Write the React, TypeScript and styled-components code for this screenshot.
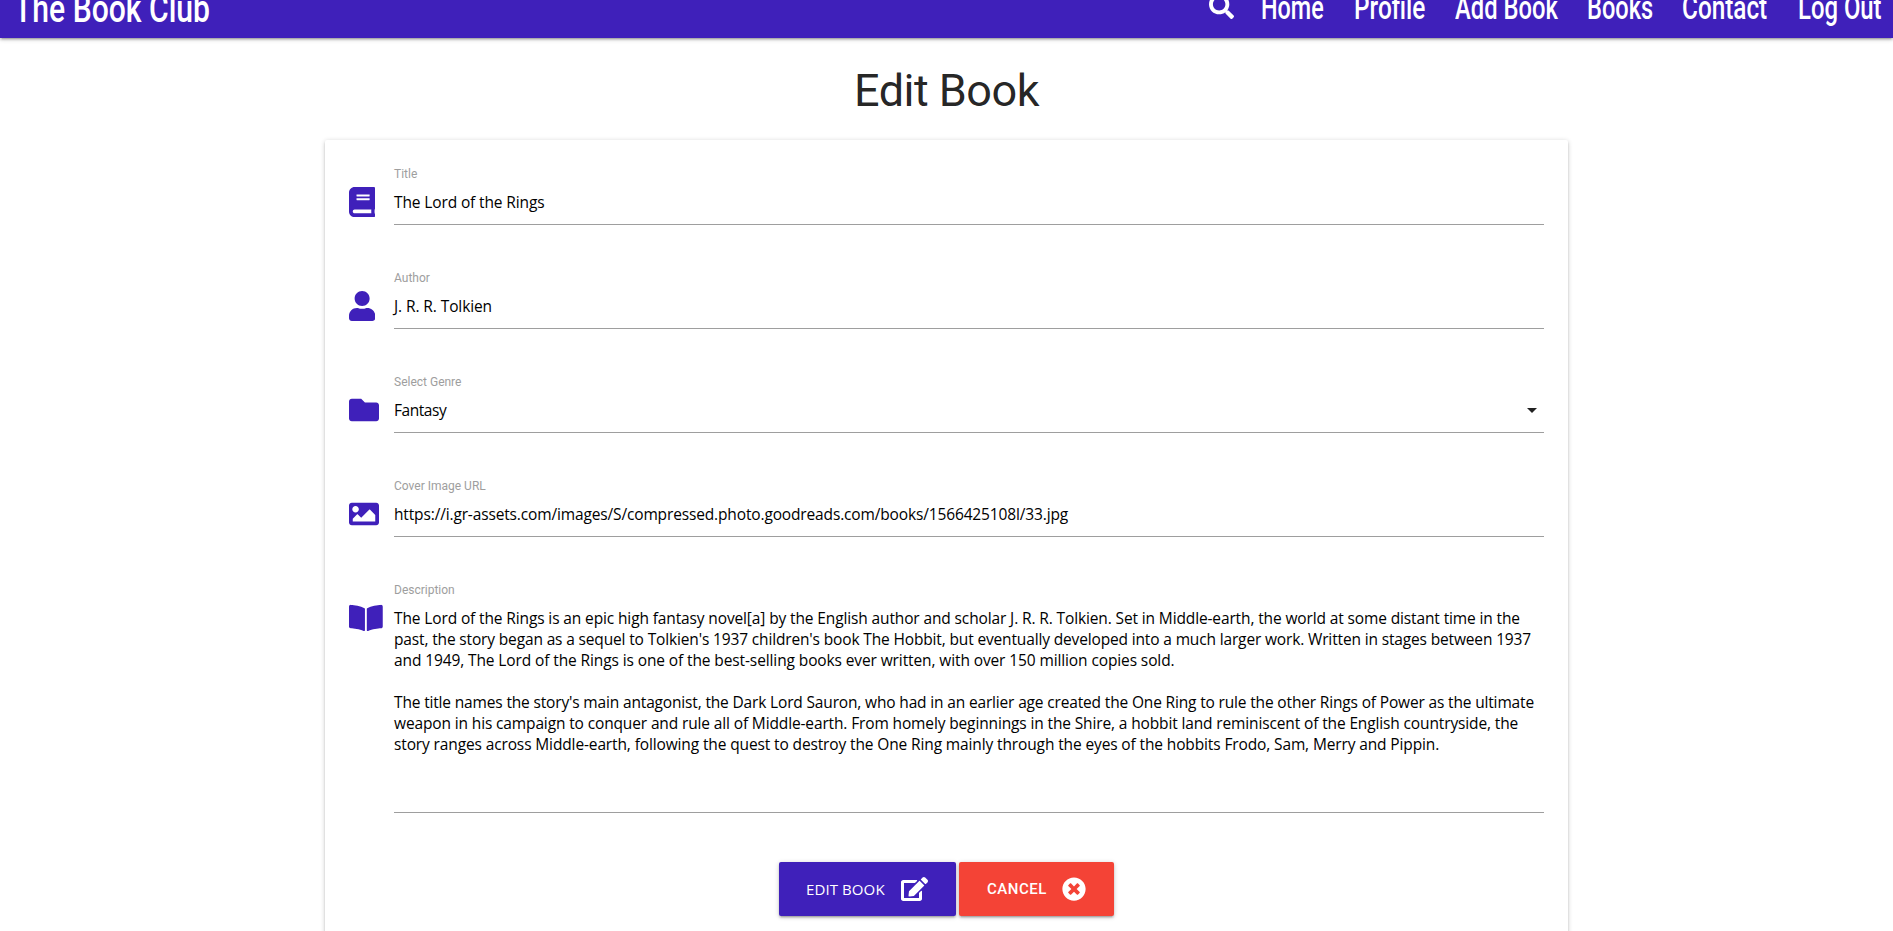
import React from 'react';
import styled, { createGlobalStyle } from 'styled-components';
import {
  FaBook,
  FaBookOpen,
  FaEdit,
  FaFolder,
  FaImage,
  FaSearch,
  FaTimesCircle,
  FaUser,
} from 'react-icons/fa';

const purple = '#3f20ba';
const red = '#f44336';
const uiFont = "'Open Sans', 'Noto Sans', sans-serif";

const GlobalStyle = createGlobalStyle`
  *, *::before, *::after { box-sizing: border-box; }
  body {
    margin: 0;
    background: #fff;
    color: rgba(0, 0, 0, 0.87);
    font-family: Roboto, sans-serif;
    font-size: 15px;
  }
  #root { height: 931px; overflow: hidden; }
`;

const Header = styled.header`
  height: 38px;
  overflow: hidden;
  background: ${purple};
`;

const HeaderShadow = styled.div`
  box-shadow: 0 2px 2px 0 rgba(0, 0, 0, 0.14), 0 3px 1px -2px rgba(0, 0, 0, 0.12),
    0 1px 5px 0 rgba(0, 0, 0, 0.2);
`;

const NavBar = styled.nav`
  display: flex;
  justify-content: space-between;
  height: 64px;
  margin-top: -26px;
  padding: 0 12px 0 14px;
  color: #fff;
  font-weight: 500;
  line-height: 64px;
  white-space: nowrap;
`;

const NavList = styled.ul`
  display: flex;
  gap: 30px;
  margin: 0;
  padding: 0;
  list-style: none;
`;

const SearchItem = styled.li`
  display: flex;
  align-items: center;
  margin-right: -3px;
  font-size: 25px;
`;

const NavItem = styled.li<{ $width: number }>`
  width: ${(p) => p.$width}px;
  padding-top: 2px;
  font-size: 33px;
`;

const Brand = styled.a`
  padding-top: 3px;
  font-size: 38px;
`;

const Condensed = styled.span<{ $scale: number }>`
  display: inline-block;
  transform: scaleX(${(p) => p.$scale});
  transform-origin: left center;
`;

const Title = styled.h1`
  margin: 27px 0 23px;
  font-size: 45px;
  font-weight: 400;
  letter-spacing: -0.5px;
  line-height: 52px;
  text-align: center;
`;

const Card = styled.form`
  width: 1243px;
  height: 860px;
  margin: 0 auto;
  padding: 27px 24px 0;
  border-radius: 2px;
  background: #fff;
  box-shadow: 0 2px 2px 0 rgba(0, 0, 0, 0.14), 0 3px 1px -2px rgba(0, 0, 0, 0.12),
    0 1px 5px 0 rgba(0, 0, 0, 0.2);
`;

const Field = styled.div`
  display: flex;
  margin-bottom: 46px;
`;

const FieldIcon = styled.div<{ $width: number }>`
  display: flex;
  align-items: center;
  width: 45px;
  height: 30px;
  margin-top: 20px;
  color: ${purple};
  svg {
    width: ${(p) => p.$width}px;
    height: 30px;
  }
`;

const FieldBody = styled.div<{ $tall?: boolean }>`
  display: flex;
  flex: 1;
  flex-direction: column;
  height: ${(p) => (p.$tall ? 230 : 58)}px;
  border-bottom: 1px solid #9e9e9e;
`;

const Label = styled.label`
  height: 14px;
  color: #9e9e9e;
  font-size: 12px;
  line-height: 14px;
`;

const Value = styled.div`
  display: flex;
  align-items: center;
  justify-content: space-between;
  height: 21px;
  margin-top: 11px;
  padding-right: 4px;
`;

const TextLine = styled.div<{ $spacing?: number }>`
  min-height: 21px;
  color: #000;
  font-family: ${uiFont};
  font-size: 15.5px;
  letter-spacing: ${(p) => p.$spacing ?? -0.13}px;
  line-height: 21px;
  white-space: nowrap;
`;

const Description = styled.div`
  margin-top: 11px;
`;

const Caret = styled.svg`
  width: 16px;
  height: 24px;
  margin-bottom: 1px;
  fill: rgba(0, 0, 0, 0.87);
`;

const Actions = styled.div`
  display: flex;
  gap: 3px;
  justify-content: center;
  padding-top: 3px;
`;

const Button = styled.button<{ $color: string; $width: number; $iconWidth: number }>`
  display: flex;
  align-items: center;
  justify-content: space-between;
  width: ${(p) => p.$width}px;
  height: 54px;
  padding: 0 28px;
  border: 0;
  border-radius: 2px;
  background: ${(p) => p.$color};
  color: #fff;
  box-shadow: 0 2px 2px 0 rgba(0, 0, 0, 0.14), 0 3px 1px -2px rgba(0, 0, 0, 0.12),
    0 1px 5px 0 rgba(0, 0, 0, 0.2);
  svg {
    flex: none;
    width: ${(p) => p.$iconWidth}px;
    height: 24px;
  }
`;

const SubmitText = styled.span`
  margin-left: -1px;
  font: 15px/21px ${uiFont};
  letter-spacing: 0.1px;
  white-space: nowrap;
`;

const CancelText = styled.span`
  font: 500 15px/21px Roboto, sans-serif;
  letter-spacing: 0.5px;
`;

const links = [
  { text: 'Home', width: 62.7, scale: 0.708 },
  { text: 'Profile', width: 71.3, scale: 0.739 },
  { text: 'Add Book', width: 101.5, scale: 0.72 },
  { text: 'Books', width: 65.5, scale: 0.715 },
  { text: 'Contact', width: 85.5, scale: 0.737 },
  { text: 'Log Out', width: 83.5, scale: 0.723 },
];

const fields = [
  { label: 'Title', value: 'The Lord of the Rings', icon: <FaBook />, iconWidth: 26.25, spacing: -0.126 },
  { label: 'Author', value: 'J. R. R. Tolkien', icon: <FaUser />, iconWidth: 26.25, spacing: -0.1 },
  { label: 'Select Genre', value: 'Fantasy', icon: <FaFolder />, iconWidth: 30, spacing: -0.45, select: true },
  {
    label: 'Cover Image URL',
    value:
      'https://i.gr-assets.com/images/S/compressed.photo.goodreads.com/books/1566425108l/33.jpg',
    icon: <FaImage />,
    iconWidth: 30,
    spacing: -0.144,
  },
];

const description = [
  { text: 'The Lord of the Rings is an epic high fantasy novel[a] by the English author and scholar J. R. R. Tolkien. Set in Middle-earth, the world at some distant time in the', spacing: -0.128 },
  { text: "past, the story began as a sequel to Tolkien's 1937 children's book The Hobbit, but eventually developed into a much larger work. Written in stages between 1937", spacing: -0.149 },
  { text: 'and 1949, The Lord of the Rings is one of the best-selling books ever written, with over 150 million copies sold.', spacing: -0.112 },
  { text: '', spacing: 0 },
  { text: "The title names the story's main antagonist, the Dark Lord Sauron, who had in an earlier age created the One Ring to rule the other Rings of Power as the ultimate", spacing: -0.161 },
  { text: 'weapon in his campaign to conquer and rule all of Middle-earth. From homely beginnings in the Shire, a hobbit land reminiscent of the English countryside, the', spacing: -0.135 },
  { text: 'story ranges across Middle-earth, following the quest to destroy the One Ring mainly through the eyes of the hobbits Frodo, Sam, Merry and Pippin.', spacing: -0.128 },
];

export default function App() {
  return (
    <>
      <GlobalStyle />
      <HeaderShadow>
        <Header>
          <NavBar>
            <Brand>
              <Condensed $scale={0.792}>The Book Club</Condensed>
            </Brand>
            <NavList>
              <SearchItem>
                <FaSearch />
              </SearchItem>
              {links.map((l) => (
                <NavItem key={l.text} $width={l.width}>
                  <Condensed $scale={l.scale}>{l.text}</Condensed>
                </NavItem>
              ))}
            </NavList>
          </NavBar>
        </Header>
      </HeaderShadow>
      <Title>Edit Book</Title>
      <Card>
        {fields.map((f) => (
          <Field key={f.label}>
            <FieldIcon $width={f.iconWidth}>{f.icon}</FieldIcon>
            <FieldBody>
              <Label>{f.label}</Label>
              <Value>
                <TextLine $spacing={f.spacing}>{f.value}</TextLine>
                {f.select && (
                  <Caret viewBox="0 0 16 24">
                    <path d="M3 10h10l-5 5z" />
                  </Caret>
                )}
              </Value>
            </FieldBody>
          </Field>
        ))}
        <Field>
          <FieldIcon $width={33.75}>
            <FaBookOpen />
          </FieldIcon>
          <FieldBody $tall>
            <Label>Description</Label>
            <Description>
              {description.map((d, i) => (
                <TextLine key={i} $spacing={d.spacing}>
                  {d.text}
                </TextLine>
              ))}
            </Description>
          </FieldBody>
        </Field>
        <Actions>
          <Button type="button" $color={purple} $width={177} $iconWidth={27}>
            <SubmitText>EDIT BOOK</SubmitText>
            <FaEdit />
          </Button>
          <Button type="button" $color={red} $width={155} $iconWidth={24}>
            <CancelText>CANCEL</CancelText>
            <FaTimesCircle />
          </Button>
        </Actions>
      </Card>
    </>
  );
}
